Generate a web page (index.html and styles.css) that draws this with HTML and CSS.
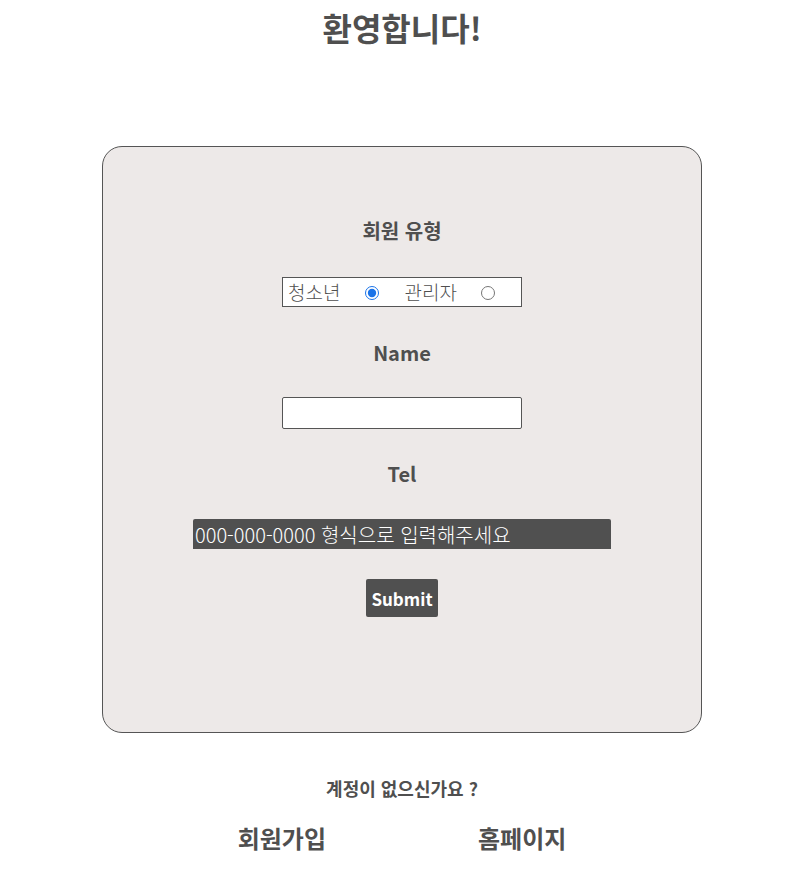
FILE: index.html
```html
<!DOCTYPE html>
<html lang="ko">
<head>
<meta charset="utf-8">
<title>환영합니다!</title>
<link rel="stylesheet" href="styles.css">
</head>
<body>
<main class="page">
  <h1 class="title">환영합니다!</h1>
  <form class="card">
    <div class="label">회원 유형</div>
    <div class="radio-box">
      <span class="radio-text">청소년</span>
      <input class="radio radio-first" type="radio" name="type" checked>
      <span class="radio-text radio-text-second">관리자</span>
      <input class="radio radio-second" type="radio" name="type">
    </div>
    <div class="label">Name</div>
    <input class="text-input" type="text">
    <div class="label">Tel</div>
    <input class="tel-input" type="text" placeholder="000-000-0000 형식으로 입력해주세요">
    <button class="submit" type="button">Submit</button>
  </form>
  <p class="question">계정이 없으신가요 ?</p>
  <nav class="links">
    <a class="link" href="#">회원가입</a>
    <a class="link" href="#">홈페이지</a>
  </nav>
</main>
</body>
</html>
```

FILE: styles.css
```css
* { box-sizing: border-box; }
html, body { margin: 0; padding: 0; background: #ffffff; }
body {
  font-family: "Noto Sans CJK KR", "Noto Sans", sans-serif;
  color: #4f4f4f;
}
.page {
  width: 804px;
  display: flex;
  flex-direction: column;
  align-items: center;
}
.title {
  margin: 0;
  padding-top: 4px;
  font-size: 32px;
  line-height: 46px;
  font-weight: 700;
  color: #4f4f4f;
}
.card {
  margin-top: 96px;
  width: 600px;
  height: 587px;
  border: 1px solid #555555;
  border-radius: 20px;
  background: #ede9e8;
  display: flex;
  flex-direction: column;
  align-items: center;
  gap: 30px;
  padding-top: 69px;
}
.label {
  font-size: 20px;
  line-height: 30px;
  font-weight: 700;
  color: #4f4f4f;
}
.radio-box {
  width: 240px;
  height: 30px;
  border: 1px solid #555555;
  background: #ffffff;
  display: flex;
  align-items: center;
  padding-left: 5px;
  margin-top: 1px;
  margin-bottom: 1px;
}
.radio-text {
  font-size: 19px;
  line-height: 28px;
  font-weight: 300;
  color: #4f4f4f;
}
.radio-text-second { margin-left: 25px; }
.radio {
  margin: 1px 0 0 25px;
  width: 14px;
  height: 14px;
  accent-color: #1a73e8;
}
.radio-second { margin-left: 24px; }
.text-input {
  width: 240px;
  height: 32px;
  border: 1px solid #555555;
  border-radius: 2px;
  background: #ffffff;
  margin: -1px 0 0;
}
.tel-input {
  width: 418px;
  height: 30px;
  border: none;
  border-radius: 2px 2px 0 0;
  background: #505050;
  color: #ffffff;
  font-family: "Noto Sans CJK KR", "Noto Sans", sans-serif;
  font-size: 20px;
  font-weight: 300;
  padding: 0 0 0 2px;
  margin: 0;
}
.tel-input::placeholder { color: #ffffff; opacity: 1; }
.submit {
  width: 72px;
  height: 38px;
  border: none;
  border-radius: 2px;
  background: #505050;
  color: #ffffff;
  font-family: "Noto Sans CJK KR", "Noto Sans", sans-serif;
  font-size: 17px;
  font-weight: 700;
  padding: 0;
}
.question {
  margin: 42px 0 0;
  font-size: 18px;
  line-height: 26px;
  font-weight: 700;
  color: #4f4f4f;
}
.links {
  margin-top: 22px;
  display: flex;
  gap: 152px;
}
.link {
  font-size: 24px;
  line-height: 30px;
  font-weight: 700;
  color: #4f4f4f;
  text-decoration: none;
}
```
